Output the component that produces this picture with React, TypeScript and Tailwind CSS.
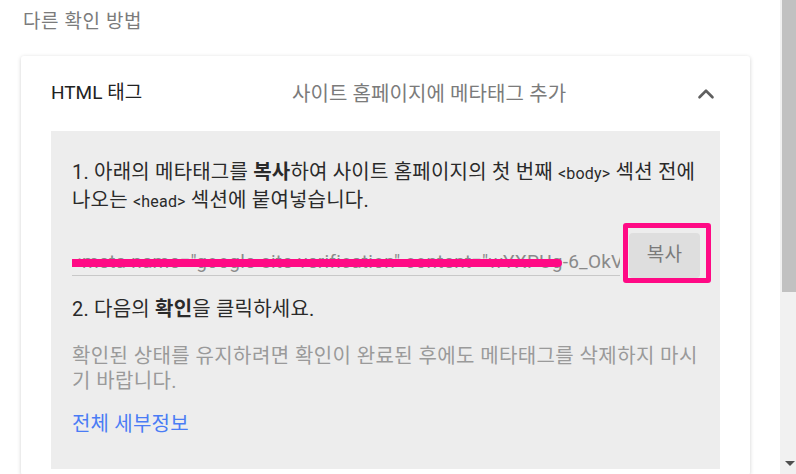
import { ChevronUp } from 'lucide-react'

const FONT = { fontFamily: 'Roboto, "Noto Sans CJK KR", sans-serif' }

function CodeRow() {
  return (
    <div className="mt-[18px] flex items-start">
      <div className="relative w-[548px] h-[43px] flex items-end pb-[2px] border-b border-[#c8c8c8] overflow-hidden">
        <span className="whitespace-nowrap text-[19px] leading-[22px] tracking-[0.25px] text-[#8a8a8a]">
          &lt;meta name="google-site-verification" content="wYXPUg-6_OkV8rT2mQ" /&gt;
        </span>
        {/* redaction stroke */}
        <div className="absolute left-[-5px] top-[26px] w-[495px] h-[8px] rounded-full bg-[#ff0a85]" />
      </div>
      <div className="relative ml-[9px]">
        <button className="w-[71px] h-[45px] rounded-sm bg-[#dedede] text-[19px] text-[#7a7a7a]">복사</button>
        {/* highlight frame */}
        <div className="absolute left-[-6px] top-[-10px] w-[88px] h-[60px] rounded-[3px] border-[5px] border-[#ff0a85]" />
      </div>
    </div>
  )
}

export default function App() {
  return (
    <div className="w-[796px] h-[474px] overflow-hidden flex bg-white" style={FONT}>
      <div className="w-[780px] h-full">
        <h2 className="pl-[23px] pt-[10px] text-[19px] leading-[24px] tracking-[0.6px] text-[#7b7b7b]">다른 확인 방법</h2>

        <div className="mt-[22px] ml-[21px] w-[729px] pb-[6px] rounded-[3px] bg-white shadow-[0_1px_4px_rgba(0,0,0,0.18)]">
          <div className="h-[75px] flex items-center pl-[30px] pr-[31px]">
            <span className="w-[241px] text-[19px] text-[#222]">HTML 태그</span>
            <span className="flex-1 text-[20px] tracking-[0.1px] text-[#7b7b7b]">사이트 홈페이지에 메타태그 추가</span>
            <ChevronUp className="w-[26px] h-[26px] text-[#5f5f5f]" strokeWidth={2.4} />
          </div>

          <div className="mx-[30px] bg-[#ededed] pl-[21px] pr-[16px] pt-[28px] pb-[32px] text-[20px] tracking-[0.2px] text-[#2a2a2a]">
            <p className="leading-[26px]">
              1. 아래의 메타태그를 <b>복사</b>하여 사이트 홈페이지의 첫 번째 <span className="text-[16px]">&lt;body&gt;</span> 섹션 전에 나오는 <span className="text-[16px]">&lt;head&gt;</span> 섹션에 붙여넣습니다.
            </p>

            <CodeRow />

            <p className="mt-[18px] leading-[26px]">
              2. 다음의 <b>확인</b>을 클릭하세요.
            </p>
            <p className="mt-[22px] leading-[25px] tracking-[0.4px] text-[#9a9a9a]">
              확인된 상태를 유지하려면 확인이 완료된 후에도 메타태그를 삭제하지 마시기 바랍니다.
            </p>
            <a className="block mt-[17px] leading-[26px] text-[#4a7cf5]">전체 세부정보</a>
          </div>
        </div>
      </div>

      {/* scrollbar */}
      <div className="w-4 h-full bg-[#f1f1f1] relative">
        <div className="ml-[2px] w-[14px] h-[292px] bg-[#c1c1c1]" />
        <div className="absolute left-[5px] top-[461px] w-0 h-0 border-l-[5px] border-r-[5px] border-t-[5px] border-l-transparent border-r-transparent border-t-[#505050]" />
      </div>
    </div>
  )
}
